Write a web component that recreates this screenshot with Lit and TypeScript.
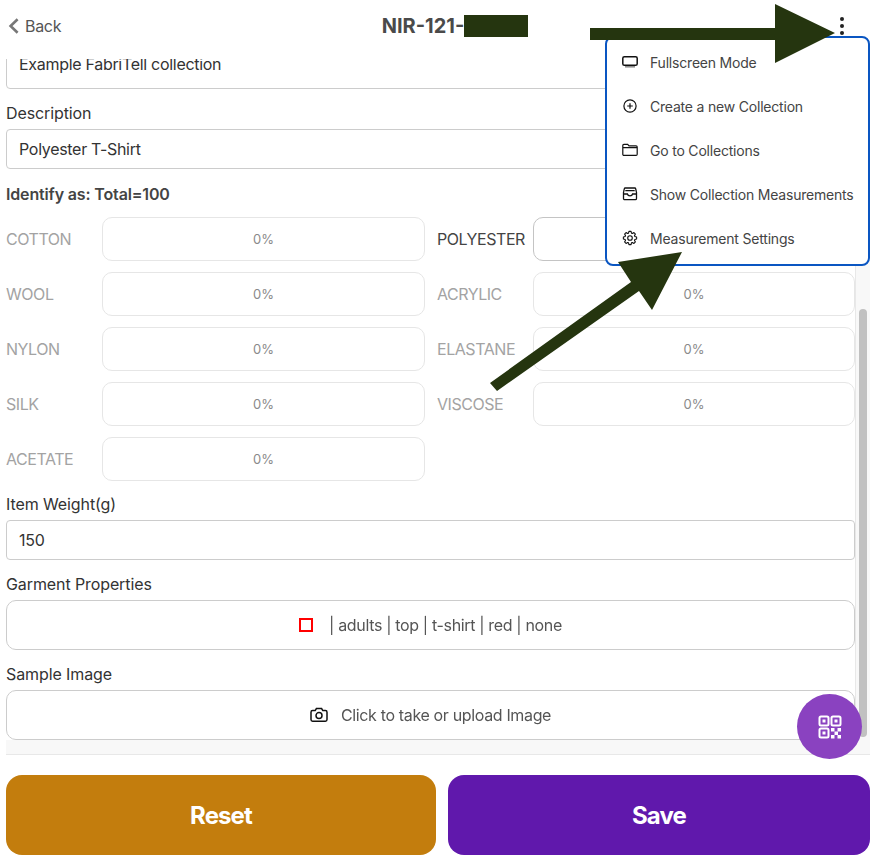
import { LitElement, css, html, svg } from "lit";
import { customElement } from "lit/decorators.js";

const fibres = [
  ["COTTON", "POLYESTER"],
  ["WOOL", "ACRYLIC"],
  ["NYLON", "ELASTANE"],
  ["SILK", "VISCOSE"],
  ["ACETATE", ""],
];

// eight toothed cog, computed so the teeth stay even
const gearPath = () => {
  const at = (deg: number, r: number) => {
    const a = (deg * Math.PI) / 180;
    return `${(8 + r * Math.sin(a)).toFixed(2)} ${(8 - r * Math.cos(a)).toFixed(2)}`;
  };
  const points: string[] = [];
  for (let i = 0; i < 8; i++) {
    const mid = i * 45;
    points.push(at(mid - 17, 5.1), at(mid - 9, 6.7), at(mid + 9, 6.7), at(mid + 17, 5.1));
  }
  return `M${points.join("L")}Z`;
};

const icons = {
  display: svg`<rect x=".8" y="2.7" width="14.4" height="8.6" rx="1.6" fill="none" stroke="currentColor" stroke-width="1.5"/><path d="M3 12.8h10" stroke="#888" stroke-width="1.5"/>`,
  plus: svg`<circle cx="8" cy="8" r="6.1" fill="none" stroke="currentColor" stroke-width="1.2"/><path d="M8 5.2v5.6M5.2 8h5.6" stroke="currentColor" stroke-width="1.2"/>`,
  folder: svg`<path d="M.8 12.300V3.500A1.100 1.100 0 0 1 1.900 2.400h3.800l1.300 1.400h7.100a1.100 1.100 0 0 1 1.100 1.100v7.400a1.100 1.100 0 0 1-1.100 1.100H1.900a1.100 1.100 0 0 1-1.100-1.100ZM.8 5.700h14.400" fill="none" stroke="currentColor" stroke-width="1.200"/>`,
  tray: svg`<path d="M3.300 2h9.400a1 1 0 0 1 1 .8l.700 3.200a1 1 0 0 1 .100.500v6a1.200 1.200 0 0 1-1.200 1.200H2.700a1.200 1.200 0 0 1-1.200-1.200v-6a1 1 0 0 1 .100-.500l.700-3.200a1 1 0 0 1 1-.8ZM3.300 4.600h9.400M1.600 8h3.800c.3 1.300 1.200 1.900 2.600 1.900s2.300-.6 2.600-1.900h3.800" fill="none" stroke="currentColor" stroke-width="1.300"/>`,
  gear: svg`<circle cx="8" cy="8" r="2.300" fill="none" stroke="currentColor" stroke-width="1.100"/><path d=${gearPath()} fill="none" stroke="currentColor" stroke-width="1.100" stroke-linejoin="round"/>`,
};

const menu: [keyof typeof icons, string][] = [
  ["display", "Fullscreen Mode"],
  ["plus", "Create a new Collection"],
  ["folder", "Go to Collections"],
  ["tray", "Show Collection Measurements"],
  ["gear", "Measurement Settings"],
];

@customElement("app-root")
export class AppRoot extends LitElement {
  static styles = css`
    :host {
      display: flex;
      flex-direction: column;
      position: relative;
      width: 876px;
      height: 863px;
      overflow: hidden;
      background: #fff;
      color: #444;
      font-family: Inter, "Liberation Sans", sans-serif;
      font-size: 16px;
      letter-spacing: -0.3px;
    }

    .header {
      height: 59px;
      flex: none;
      padding-bottom: 7px;
      box-sizing: border-box;
      display: grid;
      grid-template-columns: 1fr auto 1fr;
      align-items: center;
    }

    .back {
      display: flex;
      align-items: center;
      gap: 6px;
      padding-left: 8px;
      color: #555;
    }

    .title {
      display: flex;
      align-items: center;
      padding-left: 34px;
      font-size: 20px;
      font-weight: 700;
      letter-spacing: 0;
      color: #4a4a4a;
    }

    .redacted {
      width: 64px;
      height: 22px;
      background: #25350f;
    }

    .kebab {
      justify-self: end;
      margin-right: 32px;
      display: flex;
      flex-direction: column;
      gap: 3px;
    }

    .kebab i {
      width: 4px;
      height: 4px;
      border-radius: 50%;
      background: #222;
    }

    .scroller {
      flex: 1;
      min-height: 0;
      margin: 0 6px;
      display: grid;
      grid-template-columns: 1fr 15px;
      grid-template-rows: 1fr 15px;
    }

    .body {
      overflow: hidden;
    }

    .track-y {
      background: #f8f8f8;
      border-left: 1px solid #e8e8e8;
      padding: 250px 3px 3px 3px;
      box-sizing: border-box;
    }

    .thumb {
      height: 100%;
      background: #c1c1c1;
      border-radius: 4px;
    }

    .track-x {
      grid-column: 1 / 3;
      background: #f8f8f8;
      border-bottom: 1px solid #e8e8e8;
    }

    .field {
      margin-top: 12px;
    }

    .label {
      line-height: 24px;
      margin-bottom: 4px;
      letter-spacing: -0.1px;
      color: #333;
    }

    .input {
      height: 40px;
      box-sizing: border-box;
      border: 1px solid #ccc;
      border-radius: 4px;
      padding: 0 12px;
      display: flex;
      align-items: center;
      color: #333;
    }

    .input.first {
      height: 50px;
      margin-top: -20px;
    }

    .identify {
      margin-top: 13px;
      line-height: 24px;
      font-weight: 600;
      letter-spacing: -0.15px;
      color: #444;
    }

    .grid {
      margin: 11px 0 -1px;
      display: grid;
      grid-template-columns: 419px 418px;
      column-gap: 12px;
      row-gap: 11px;
    }

    .fibre {
      display: grid;
      grid-template-columns: 96px 1fr;
      align-items: center;
      letter-spacing: -0.45px;
      color: #a3a3a3;
    }

    .fibre .pct {
      height: 44px;
      box-sizing: border-box;
      border: 1px solid #e6e6e6;
      border-radius: 10px;
      display: flex;
      align-items: center;
      justify-content: center;
      font-size: 13px;
      letter-spacing: 0;
      color: #8a8a8a;
    }

    .fibre.on {
      color: #444;
    }

    .fibre.on .pct {
      border-color: #c4c4c4;
    }

    .action {
      box-sizing: border-box;
      height: 50px;
      border: 1px solid #ccc;
      border-radius: 10px;
      display: flex;
      align-items: center;
      justify-content: center;
      letter-spacing: -0.35px;
      color: #555;
      will-change: transform;
    }

    .swatch {
      width: 14px;
      height: 14px;
      box-sizing: border-box;
      border: 2px solid #f00;
      margin-right: 16px;
    }

    .action svg {
      margin-right: 13px;
      color: #111;
    }

    .footer {
      flex: none;
      padding: 20px 6px 8px;
      display: grid;
      grid-template-columns: 430px 422px;
      column-gap: 12px;
    }

    .btn {
      height: 80px;
      border-radius: 16px;
      display: flex;
      align-items: center;
      justify-content: center;
      color: #fff;
      font-size: 24px;
      font-weight: 700;
      letter-spacing: -0.9px;
    }

    .reset {
      background: #c37d0d;
    }

    .save {
      background: #6018ac;
    }

    .menu {
      position: absolute;
      left: 605px;
      top: 36px;
      width: 265px;
      height: 230px;
      box-sizing: border-box;
      background: #fff;
      border: 2px solid #0a56c2;
      border-radius: 8px;
      padding: 2px 0 0 15px;
    }

    .item {
      height: 44px;
      display: flex;
      align-items: center;
      gap: 12px;
      font-size: 14px;
      letter-spacing: -0.2px;
      color: #444;
    }

    .item svg {
      color: #111;
      flex: none;
    }

    .fab {
      position: absolute;
      left: 797px;
      top: 694px;
      width: 65px;
      height: 65px;
      border-radius: 50%;
      background: #8a42c0;
      display: flex;
      align-items: center;
      justify-content: center;
    }

    .arrows {
      position: absolute;
      left: 0;
      top: 0;
      pointer-events: none;
    }
  `;

  render() {
    return html`
      <div class="header">
        <div class="back">
          <svg width="11" height="16" viewBox="0 0 11 16">
            <path d="M9.600 1.200 2.600 8 9.600 14.800" fill="none" stroke="#777" stroke-width="2.600" />
          </svg>
          Back
        </div>
        <div class="title">NIR-121-<span class="redacted"></span></div>
        <div class="kebab"><i></i><i></i><i></i></div>
      </div>

      <div class="scroller">
        <div class="body">
          <div class="input first">Example FabriTell collection</div>
          <div class="field">
            <div class="label">Description</div>
            <div class="input">Polyester T-Shirt</div>
          </div>
          <div class="identify">Identify as: Total=100</div>
          <div class="grid">
            ${fibres.flat().map((name) =>
              name
                ? html`<div class="fibre ${name === "POLYESTER" ? "on" : ""}">
                    <span>${name}</span>
                    <div class="pct">0%</div>
                  </div>`
                : null
            )}
          </div>
          <div class="field">
            <div class="label">Item Weight(g)</div>
            <div class="input">150</div>
          </div>
          <div class="field">
            <div class="label">Garment Properties</div>
            <div class="action"><span class="swatch"></span>| adults | top | t-shirt | red | none</div>
          </div>
          <div class="field">
            <div class="label">Sample Image</div>
            <div class="action">
              <svg width="18" height="16" viewBox="0 0 18 16">
                <path
                  d="M2.600 3.600h2.600l1.200-2h5.200l1.200 2h2.600A1.600 1.600 0 0 1 17 5.200v7.400a1.600 1.600 0 0 1-1.600 1.600H2.600A1.600 1.600 0 0 1 1 12.600V5.200a1.600 1.600 0 0 1 1.600-1.600Z"
                  fill="none"
                  stroke="currentColor"
                  stroke-width="1.500"
                />
                <circle cx="9" cy="8.600" r="3" fill="none" stroke="currentColor" stroke-width="1.500" />
              </svg>
              Click to take or upload Image
            </div>
          </div>
        </div>
        <div class="track-y"><div class="thumb"></div></div>
        <div class="track-x"></div>
      </div>

      <div class="footer">
        <div class="btn reset">Reset</div>
        <div class="btn save">Save</div>
      </div>

      <div class="menu">
        ${menu.map(
          ([icon, text]) => html`<div class="item">
            <svg width="16" height="16" viewBox="0 0 16 16">${icons[icon]}</svg>
            ${text}
          </div>`
        )}
      </div>

      <div class="fab">
        <svg width="24" height="24" viewBox="0 0 24 24" fill="none" stroke="#fff" stroke-width="2">
          <rect x="1.500" y="1.500" width="9" height="9" rx="1.500" />
          <rect x="13.500" y="1.500" width="9" height="9" rx="1.500" />
          <rect x="1.500" y="13.500" width="9" height="9" rx="1.500" />
          <g fill="#fff" stroke="none">
            <rect x="4.500" y="4.500" width="3" height="3" />
            <rect x="16.500" y="4.500" width="3" height="3" />
            <rect x="4.500" y="16.500" width="3" height="3" />
            <rect x="13" y="13" width="3.500" height="3.500" />
            <rect x="19.500" y="13" width="3.500" height="3.500" />
            <rect x="16.500" y="16.500" width="3.500" height="3.500" />
            <rect x="13" y="20" width="3.500" height="3.500" />
            <rect x="19.500" y="20" width="3.500" height="3.500" />
          </g>
        </svg>
      </div>

      <svg class="arrows" width="876" height="863" viewBox="0 0 876 863">
        <path d="M590 28H775V4L835 33 775 63V40H590Z" fill="#25350f" />
        <path d="M490 383 631 282 618 262 682 252 652 310 639 291 497 391Z" fill="#25350f" />
      </svg>
    `;
  }
}
